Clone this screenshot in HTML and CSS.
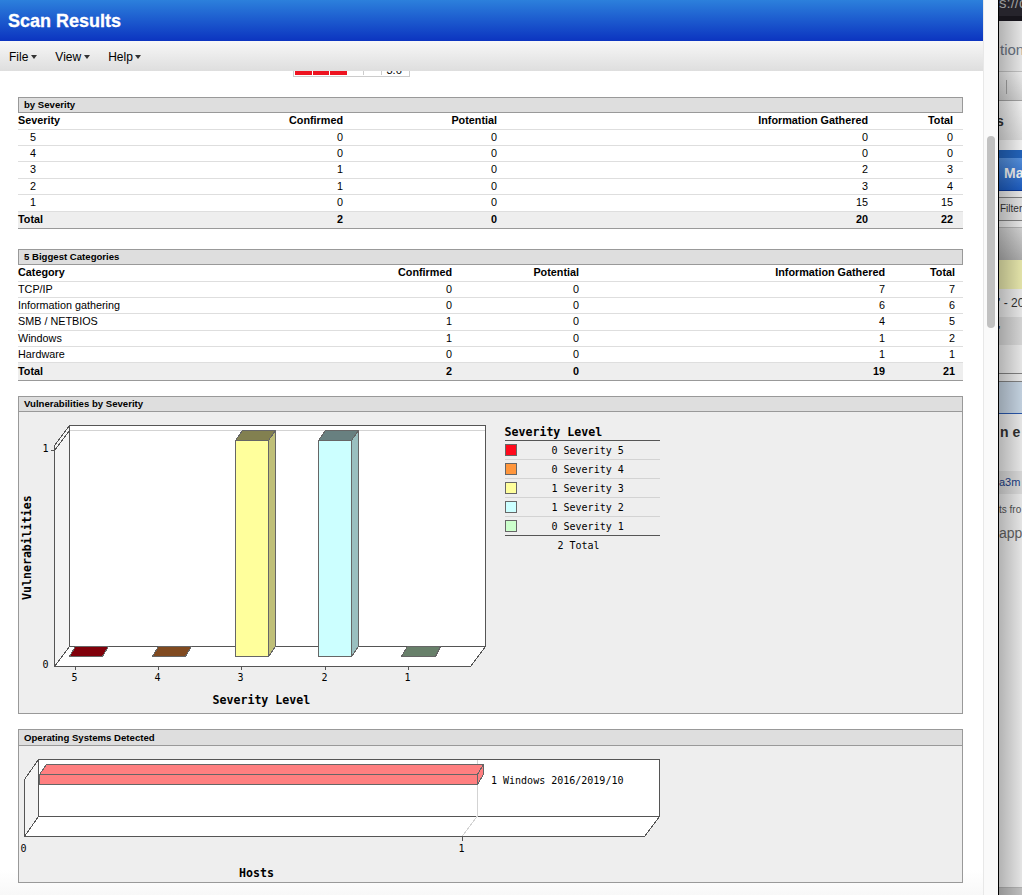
FILE: index.html
```
<!DOCTYPE html>
<html lang="en">
<head>
    <meta charset="UTF-8">
    <meta name="viewport" content="width=device-width, initial-scale=1.0">
    <title>Scan Results</title>
    <link rel="stylesheet" href="styles.css">
</head>
<body>
    <div class="desktop">
        <div class="window">
            <header class="title-bar">Scan Results</header>
            <nav class="menu">
                <a class="menu-item">File<svg class="caret" width="6" height="4"><path d="M0 0h6L3 4z"/></svg></a>
                <a class="menu-item">View<svg class="caret" width="6" height="4"><path d="M0 0h6L3 4z"/></svg></a>
                <a class="menu-item">Help<svg class="caret" width="6" height="4"><path d="M0 0h6L3 4z"/></svg></a>
            </nav>
            <main class="report">
                <div class="rating">
                    <span class="cell on"></span>
                    <span class="cell on"></span>
                    <span class="cell on"></span>
                    <span class="cell"></span>
                    <span class="cell"></span>
                    <span class="score">3.6</span>
                </div>

                <h2 class="heading">by Severity</h2>
                <table class="table severity">
                    <tr class="tall"><th class="c1">Severity</th><th class="c2">Confirmed</th><th class="c3">Potential</th><th class="c4">Information Gathered</th><th class="c5">Total</th></tr>
                    <tr><td>5</td><td>0</td><td>0</td><td>0</td><td>0</td></tr>
                    <tr><td>4</td><td>0</td><td>0</td><td>0</td><td>0</td></tr>
                    <tr class="tall"><td>3</td><td>1</td><td>0</td><td>2</td><td>3</td></tr>
                    <tr><td>2</td><td>1</td><td>0</td><td>3</td><td>4</td></tr>
                    <tr class="tall"><td>1</td><td>0</td><td>0</td><td>15</td><td>15</td></tr>
                    <tr class="total tall"><td>Total</td><td>2</td><td>0</td><td>20</td><td>22</td></tr>
                </table>

                <h2 class="heading">5 Biggest Categories</h2>
                <table class="table categories">
                    <tr class="tall"><th class="c1">Category</th><th class="c2">Confirmed</th><th class="c3">Potential</th><th class="c4">Information Gathered</th><th class="c5">Total</th></tr>
                    <tr><td>TCP/IP</td><td>0</td><td>0</td><td>7</td><td>7</td></tr>
                    <tr><td>Information gathering</td><td>0</td><td>0</td><td>6</td><td>6</td></tr>
                    <tr class="tall"><td>SMB / NETBIOS</td><td>1</td><td>0</td><td>4</td><td>5</td></tr>
                    <tr><td>Windows</td><td>1</td><td>0</td><td>1</td><td>2</td></tr>
                    <tr><td>Hardware</td><td>0</td><td>0</td><td>1</td><td>1</td></tr>
                    <tr class="total taller"><td>Total</td><td>2</td><td>0</td><td>19</td><td>21</td></tr>
                </table>

                <section class="panel">
                    <h2 class="heading">Vulnerabilities by Severity</h2>
                    <svg class="chart" width="943" height="301" viewBox="19 412 943 301">
                        <!-- walls and floor -->
                        <path class="wall" d="M54.5 445.5L69.5 425.5V646.5L54.5 666.5z"/>
                        <path class="face" d="M69.5 425.5H485.5V646.5H69.5z"/>
                        <path class="face" d="M69.5 646.5H485.5L470.5 666.5H54.5z"/>
                        <path class="grid" d="M70 430.5H485"/>
                        <path class="line" d="M54.5 450.5L69.5 430.5M51 450.5H54M75.5 667V670M158.5 667V670M241.5 667V670M325.5 667V670M408.5 667V670"/>
                        <!-- empty bars -->
                        <path class="bar" fill="#80000a" d="M69.5 656.5L75.5 646.5H108.5L102.5 656.5z"/>
                        <path class="bar" fill="#804a20" d="M152.5 656.5L158.5 646.5H191.5L185.5 656.5z"/>
                        <path class="bar" fill="#68806a" d="M401.5 656.5L407.5 646.5H440.5L435.5 656.5z"/>
                        <!-- severity 3 -->
                        <path class="bar" fill="#828050" d="M235.5 440.5L242.5 430.5H275.5L268.5 440.5z"/>
                        <path class="bar" fill="#bfbf78" d="M268.5 440.5L275.5 430.5V646.5L268.5 656.5z"/>
                        <path class="bar" fill="#ffff9c" d="M235.5 440.5H268.5V656.5H235.5z"/>
                        <!-- severity 2 -->
                        <path class="bar" fill="#688080" d="M318.5 440.5L325.5 430.5H358.5L351.5 440.5z"/>
                        <path class="bar" fill="#9abfbf" d="M351.5 440.5L358.5 430.5V646.5L351.5 656.5z"/>
                        <path class="bar" fill="#ccffff" d="M318.5 440.5H351.5V656.5H318.5z"/>
                        <g class="label">
                            <text x="42.5" y="452">1</text>
                            <text x="42.5" y="668">0</text>
                            <text x="71.5" y="681">5</text>
                            <text x="154.5" y="681">4</text>
                            <text x="237.5" y="681">3</text>
                            <text x="321.5" y="681">2</text>
                            <text x="404.5" y="681">1</text>
                        </g>
                        <text class="axis" x="212.5" y="704">Severity Level</text>
                        <text class="axis" transform="translate(31 600) rotate(-90)">Vulnerabilities</text>
                        <!-- legend -->
                        <text class="axis" x="504.5" y="436">Severity Level</text>
                        <path class="line" d="M505 440.5H660M505 535.5H660"/>
                        <path class="grid" d="M505 459.5H660M505 478.5H660M505 497.5H660M505 516.5H660"/>
                        <rect class="bar" fill="#ff0a1c" x="505.5" y="444.5" width="11" height="11"/>
                        <rect class="bar" fill="#ff963c" x="505.5" y="463.5" width="11" height="11"/>
                        <rect class="bar" fill="#ffff9c" x="505.5" y="482.5" width="11" height="11"/>
                        <rect class="bar" fill="#ccffff" x="505.5" y="501.5" width="11" height="11"/>
                        <rect class="bar" fill="#ccffcc" x="505.5" y="520.5" width="11" height="11"/>
                        <g class="label">
                            <text x="551.5" y="454">0 Severity 5</text>
                            <text x="551.5" y="473">0 Severity 4</text>
                            <text x="551.5" y="492">1 Severity 3</text>
                            <text x="551.5" y="511">1 Severity 2</text>
                            <text x="551.5" y="530">0 Severity 1</text>
                            <text x="557.5" y="549">2 Total</text>
                        </g>
                    </svg>
                </section>

                <section class="panel">
                    <h2 class="heading os">Operating Systems Detected</h2>
                    <svg class="chart" width="943" height="136" viewBox="19 746 943 136">
                        <path class="wall" d="M24.5 779.5L38.5 759.5V816.5L24.5 836.5z"/>
                        <path class="face" d="M38.5 759.5H659.5V816.5H38.5z"/>
                        <path class="face" d="M38.5 816.5H659.5L644.5 836.5H24.5z"/>
                        <path class="grid" d="M477.5 760V816L462.5 836"/>
                        <path class="line" d="M462.5 837V841"/>
                        <path class="bar" fill="#ff7f80" d="M39.5 774.5L46.5 764.5H483.5L477.5 774.5z"/>
                        <path class="bar" fill="#ff7f80" d="M477.5 774.5L483.5 764.5V774.5L477.5 784.5z"/>
                        <path class="bar" fill="#ff7f80" d="M39.5 774.5H477.5V784.5H39.5z"/>
                        <g class="label">
                            <text x="20.5" y="852">0</text>
                            <text x="458.5" y="852">1</text>
                            <text x="491" y="784">1 Windows 2016/2019/10</text>
                        </g>
                        <text class="axis" x="239" y="877">Hosts</text>
                    </svg>
                </section>
            </main>
        </div>

        <div class="scrollbar"><div class="thumb"></div></div>

        <aside class="behind">
            <div class="b-url">s://q</div>
            <div class="b-tabs">tion</div>
            <div class="b-tools"><i></i></div>
            <div class="b-name">s</div>
            <div class="b-title">Ma</div>
            <div class="b-filter">Filter</div>
            <div class="b-head"></div>
            <div class="b-yellow"></div>
            <div class="b-date">' - 20</div>
            <div class="b-grey">'</div>
            <div class="b-blank"></div>
            <div class="b-blue"></div>
            <div class="b-scan">n e</div>
            <div class="b-link">a3m</div>
            <div class="b-from">ts fro</div>
            <div class="b-app">app</div>
            <div class="b-foot"></div>
        </aside>
    </div>
</body>
</html>
```
FILE: styles.css
```
* {
    box-sizing: border-box;
}

body {
    font-family: "Liberation Sans", Arial, sans-serif;
    margin: 0;
    color: #000;
    overflow: hidden;
}

.desktop {
    display: flex;
    width: 1022px;
    height: 895px;
    overflow: hidden;
}

.window {
    display: flex;
    flex-direction: column;
    width: 983px;
    height: 895px;
    background: linear-gradient(#fff 870px, #f8f8f8 895px);
}

.title-bar {
    height: 41px;
    flex: none;
    padding-left: 8px;
    font-size: 18px;
    font-weight: bold;
    line-height: 42px;
    color: #fff;
    -webkit-text-stroke: 0.3px #fff;
    background: linear-gradient(#2c80dc, #0c34c0);
}

.menu {
    display: flex;
    flex: none;
    gap: 18.5px;
    height: 30px;
    padding-left: 9px;
    font-size: 12px;
    line-height: 32px;
    background: linear-gradient(#f7f7f7, #dedede);
}

.caret {
    margin-left: 2.5px;
    vertical-align: 2px;
    fill: #333;
}

.report {
    flex: 1;
    padding: 0 20px 0 18px;
    overflow: hidden;
}

.rating {
    display: flex;
    gap: 1px;
    width: 117px;
    height: 18px;
    margin: -12px 0 20px 275px;
    padding: 1px;
    border: 1px solid #ccc;
}

.cell {
    width: 16.5px;
    border-right: 1px solid #ccc;
}

.cell.on {
    background: #ee1320;
    border-color: #ee1320;
}

.score {
    padding-left: 4px;
    font-size: 11px;
    line-height: 18px;
}

.heading {
    height: 16px;
    margin: 0;
    padding-left: 5px;
    border: 1px solid #999;
    font-size: 9.6px;
    line-height: 14px;
    background: #dedede;
}

.table {
    width: 945px;
    margin-bottom: 20px;
    table-layout: fixed;
    border-collapse: separate;
    border-spacing: 0;
    font-size: 10.8px;
}

.table tr {
    height: 16px;
}

.table .tall {
    height: 17px;
}

.table .taller {
    height: 18px;
}

.table th, .table td {
    padding: 0;
    border-bottom: 1px solid #dedede;
    line-height: 15px;
    text-align: right;
    vertical-align: top;
}

.table th:first-child, .table td:first-child {
    text-align: left;
}

.table .total td {
    font-weight: bold;
    background: #eee;
    border-bottom-color: #999;
}

.severity .c1 { width: 170px; }
.severity .c2 { width: 155px; }
.severity .c3 { width: 154px; }
.severity .c4 { width: 371px; }
.severity th:last-child, .severity td:last-child { padding-right: 10px; }
.severity tr:not(.total) td:first-child { padding-left: 12px; }

.categories {
    margin-bottom: 15px;
}

.categories .c1 { width: 280px; }
.categories .c2 { width: 154px; }
.categories .c3 { width: 127px; }
.categories .c4 { width: 306px; }
.categories th:last-child, .categories td:last-child { padding-right: 8px; }

.categories .total td {
    line-height: 16px;
}

.panel {
    width: 945px;
    margin-bottom: 15px;
    border: 1px solid #999;
    background: #eee;
}

.panel .heading {
    height: 15px;
    border-width: 0 0 1px;
}

.panel .heading.os {
    height: 16px;
    line-height: 15px;
}

.chart {
    display: block;
    shape-rendering: crispEdges;
}

.line, .face, .wall {
    stroke: #555;
}

.line {
    fill: none;
}

.face {
    fill: #fff;
}

.wall {
    fill: #f4f4f4;
}

.bar {
    stroke: #666;
}

.grid {
    fill: none;
    stroke: #d3d3d3;
}

.label {
    font: 10px "DejaVu Sans Mono", monospace;
}

.axis {
    font: bold 11.6px "DejaVu Sans Mono", monospace;
}

.scrollbar {
    width: 16px;
    padding: 136px 0 0 3px;
    background: #fafafa;
    border-left: 1px solid #e8e8e8;
    border-right: 1px solid #000;
}

.thumb {
    width: 8px;
    height: 192px;
    border-radius: 4px;
    background: #c1c1c1;
}

/* slice of the browser window under the report */
.behind {
    position: relative;
    width: 23px;
    overflow: hidden;
    white-space: nowrap;
    color: #333;
    background: #f5f5f5;
}

.behind::after {
    content: "";
    position: absolute;
    inset: 21px 0 0;
    background: linear-gradient(90deg, rgba(0, 0, 0, 0.27), rgba(0, 0, 0, 0.07));
}

.b-url {
    height: 21px;
    border-bottom: 5px solid #17151c;
    font-size: 15px;
    line-height: 6px;
    color: #999;
    background: #26242c;
}

.b-tabs {
    height: 51px;
    border-bottom: 1px solid #ccc;
    font-size: 15px;
    line-height: 57px;
    text-indent: 1px;
    color: #6e7888;
}

.b-tools {
    height: 29px;
    padding: 8px 7px;
    border-bottom: 1px solid #aaa;
    background: linear-gradient(#fafafa, #dcdcdc);
}

.b-tools i {
    display: block;
    height: 14px;
    border-left: 1px solid #aaa;
}

.b-name {
    height: 49px;
    border-bottom: 10px solid #fff;
    font-size: 14px;
    font-weight: bold;
    line-height: 40px;
    text-indent: -3px;
    background: linear-gradient(#fff, #e6e6e6);
}

.b-title {
    height: 41px;
    margin-bottom: 6px;
    padding-left: 5px;
    border-top: 8px solid #2468c4;
    border-bottom: 1px solid #0b3a9e;
    font-size: 14px;
    font-weight: bold;
    line-height: 30px;
    color: #fff;
    background: linear-gradient(#5a98e8, #1e60c8);
}

.b-filter {
    height: 24px;
    margin-bottom: 6px;
    padding-left: 1px;
    border: solid #888;
    border-width: 1px 0;
    font-size: 10px;
    line-height: 22px;
    background: #eee;
}

.b-head {
    height: 33px;
    border-top: 1px solid #bbb;
    background: linear-gradient(#dcdcdc, #b4b4b4);
}

.b-yellow {
    height: 29px;
    background: #f2f2b4;
}

.b-date {
    height: 28px;
    font-size: 12px;
    line-height: 28px;
    text-indent: -1px;
}

.b-grey {
    height: 28px;
    font-size: 12px;
    line-height: 28px;
    text-indent: -1px;
    background: #e2e2e2;
}

.b-blank {
    height: 29px;
    border-bottom: 1px solid #888;
}

.b-blue {
    height: 33px;
    margin-top: 7px;
    border-top: 1px solid #888;
    border-bottom: 1px solid #2c5cb4;
    background: #cfdeed;
}

.b-scan {
    height: 57px;
    padding-left: 1px;
    font-size: 14px;
    font-weight: bold;
    line-height: 36px;
}

.b-link {
    height: 23px;
    font-size: 11px;
    line-height: 22px;
    color: #1a418c;
    background: #e4e4e4;
}

.b-from {
    height: 26px;
    font-size: 10px;
    line-height: 31px;
    color: #555;
}

.b-app {
    height: 368px;
    border-bottom: 1px solid #bbb;
    font-size: 14px;
    line-height: 27px;
    color: #666;
}

.b-foot {
    height: 8px;
    background: #ccc;
}
```
